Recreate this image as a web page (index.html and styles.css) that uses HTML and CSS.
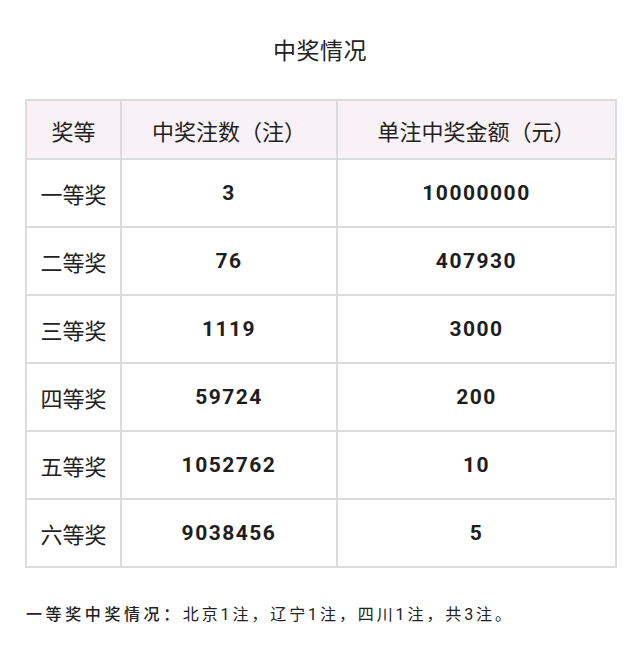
FILE: index.html
```html
<!DOCTYPE html>
<html lang="zh">
<head>
<meta charset="utf-8">
<link rel="stylesheet" href="styles.css">
</head>
<body>
<div class="page">
  <h1 class="title">中奖情况</h1>
  <table class="prize">
    <colgroup>
      <col class="c1"><col class="c2"><col class="c3">
    </colgroup>
    <thead>
      <tr><th>奖等</th><th>中奖注数（注）</th><th>单注中奖金额（元）</th></tr>
    </thead>
    <tbody>
      <tr><td class="lbl">一等奖</td><td class="num">3</td><td class="num">10000000</td></tr>
      <tr><td class="lbl">二等奖</td><td class="num">76</td><td class="num">407930</td></tr>
      <tr><td class="lbl">三等奖</td><td class="num">1119</td><td class="num">3000</td></tr>
      <tr><td class="lbl">四等奖</td><td class="num">59724</td><td class="num">200</td></tr>
      <tr><td class="lbl">五等奖</td><td class="num">1052762</td><td class="num">10</td></tr>
      <tr><td class="lbl">六等奖</td><td class="num">9038456</td><td class="num">5</td></tr>
    </tbody>
  </table>
  <p class="note"><span class="note-head">一等奖中奖情况：</span><span class="note-body">北京1注，辽宁1注，四川1注，共3注。</span></p>
</div>
</body>
</html>
```

FILE: styles.css
```css
html, body {
  margin: 0;
  padding: 0;
  background: #ffffff;
}
body {
  font-family: "Noto Sans CJK SC", "Noto Sans", sans-serif;
  color: #222222;
}
.page {
  width: 640px;
  padding: 34px 0 0 0;
  box-sizing: border-box;
}
.title {
  margin: 0;
  text-align: center;
  font-size: 23px;
  font-weight: 400;
  line-height: 30px;
  letter-spacing: 0.5px;
}
.prize {
  margin: 35px 0 0 25px;
  width: 590px;
  border-collapse: collapse;
  table-layout: fixed;
}
.c1 { width: 95px; }
.c2 { width: 216px; }
.c3 { width: 279px; }
.prize th, .prize td {
  border: 2px solid #dcdcdc;
  text-align: center;
  vertical-align: middle;
  padding: 0;
}
.prize th {
  background: #f8f1f5;
  height: 57px;
  font-size: 22px;
  font-weight: 400;
}
.prize td {
  height: 66px;
}
.lbl {
  font-size: 22px;
  font-weight: 400;
}
.num {
  font-family: Roboto, "Liberation Sans", sans-serif;
  font-size: 21px;
  font-weight: 700;
  letter-spacing: 1.5px;
  color: #1e1e1e;
}
.note {
  margin: 33px 0 0 26px;
  font-size: 16px;
  line-height: 24px;
}
.note-head {
  font-weight: 500;
  letter-spacing: 3.6px;
}
.note-body {
  letter-spacing: 2.9px;
  font-family: Roboto, "Noto Sans CJK SC", sans-serif;
}
```
